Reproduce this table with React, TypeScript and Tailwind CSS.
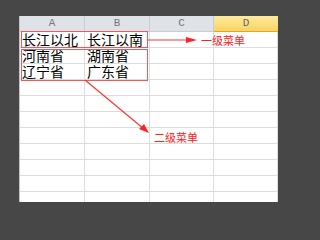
import React from "react";

const cols = [
  { name: "A", w: "w-[65px]" },
  { name: "B", w: "w-[65px]" },
  { name: "C", w: "w-[64px]" },
  { name: "D", w: "w-[64px]" },
];

const rows: string[][] = [
  ["长江以北", "长江以南", "", ""],
  ["河南省", "湖南省", "", ""],
  ["辽宁省", "广东省", "", ""],
  ["", "", "", ""],
  ["", "", "", ""],
  ["", "", "", ""],
  ["", "", "", ""],
  ["", "", "", ""],
  ["", "", "", ""],
  ["", "", "", ""],
  ["", "", "", ""],
];

const cjk = "font-['Noto_Sans_CJK_SC','Noto_Sans',sans-serif]";

export default function App() {
  return (
    <div className="w-[320px] h-[240px] bg-[#474747] pl-[19px] pt-[16px] overflow-hidden">
      <div className="relative w-[259px] h-[186px] bg-white border-l border-[#c4c4c4] overflow-hidden">
        {/* header */}
        <div className="flex h-[16px]">
          {cols.map((c) =>
            c.name === "D" ? (
              <div
                key={c.name}
                className={`${c.w} h-[16px] flex items-center justify-center border-b border-[#e2a52c] bg-gradient-to-b from-[#fdeaa0] to-[#f8d45e] text-[11px] text-[#666] font-['Liberation_Mono',monospace]`}
              >
                {c.name}
              </div>
            ) : (
              <div
                key={c.name}
                className={`${c.w} h-[16px] flex items-center justify-center border-r border-b border-[#c9ccd1] bg-[#dfe2e7] text-[11px] text-[#777] font-['Liberation_Mono',monospace]`}
              >
                {c.name}
              </div>
            )
          )}
        </div>

        {/* rows */}
        {rows.map((r, i) => (
          <div key={i} className="flex h-[16px]">
            {r.map((v, j) => (
              <div
                key={j}
                className={`${cols[j].w} h-[16px] border-b border-r border-[#dcdcdc] pl-[2px] text-[14px] leading-[15px] text-black whitespace-nowrap ${cjk}`}
              >
                {v}
              </div>
            ))}
          </div>
        ))}

        {/* annotations */}
        <div className="absolute left-[1px] top-[15px] w-[127px] h-[17px] border-[1.5px] border-[#f2575a]" />
        <div className="absolute left-[1px] top-[33px] w-[127px] h-[32px] border-[1.5px] border-[#f2575a]" />

        <svg className="absolute left-0 top-0" width="259" height="186">
          <line x1="128" y1="24" x2="168" y2="24" stroke="#ff3333" strokeWidth="1.2" />
          <polygon points="166,21 177,24 166,27" fill="#ff2222" />
          <line x1="65" y1="64" x2="124" y2="113" stroke="#ff3333" strokeWidth="1.2" />
          <polygon points="119,113 129,117 124,108" fill="#ff2222" />
        </svg>

        <div className={`absolute left-[181px] top-[17px] text-[11px] leading-[14px] text-[#ff2020] ${cjk}`}>
          一级菜单
        </div>
        <div className={`absolute left-[134px] top-[114px] text-[11px] leading-[14px] text-[#ff2020] ${cjk}`}>
          二级菜单
        </div>
      </div>
    </div>
  );
}
